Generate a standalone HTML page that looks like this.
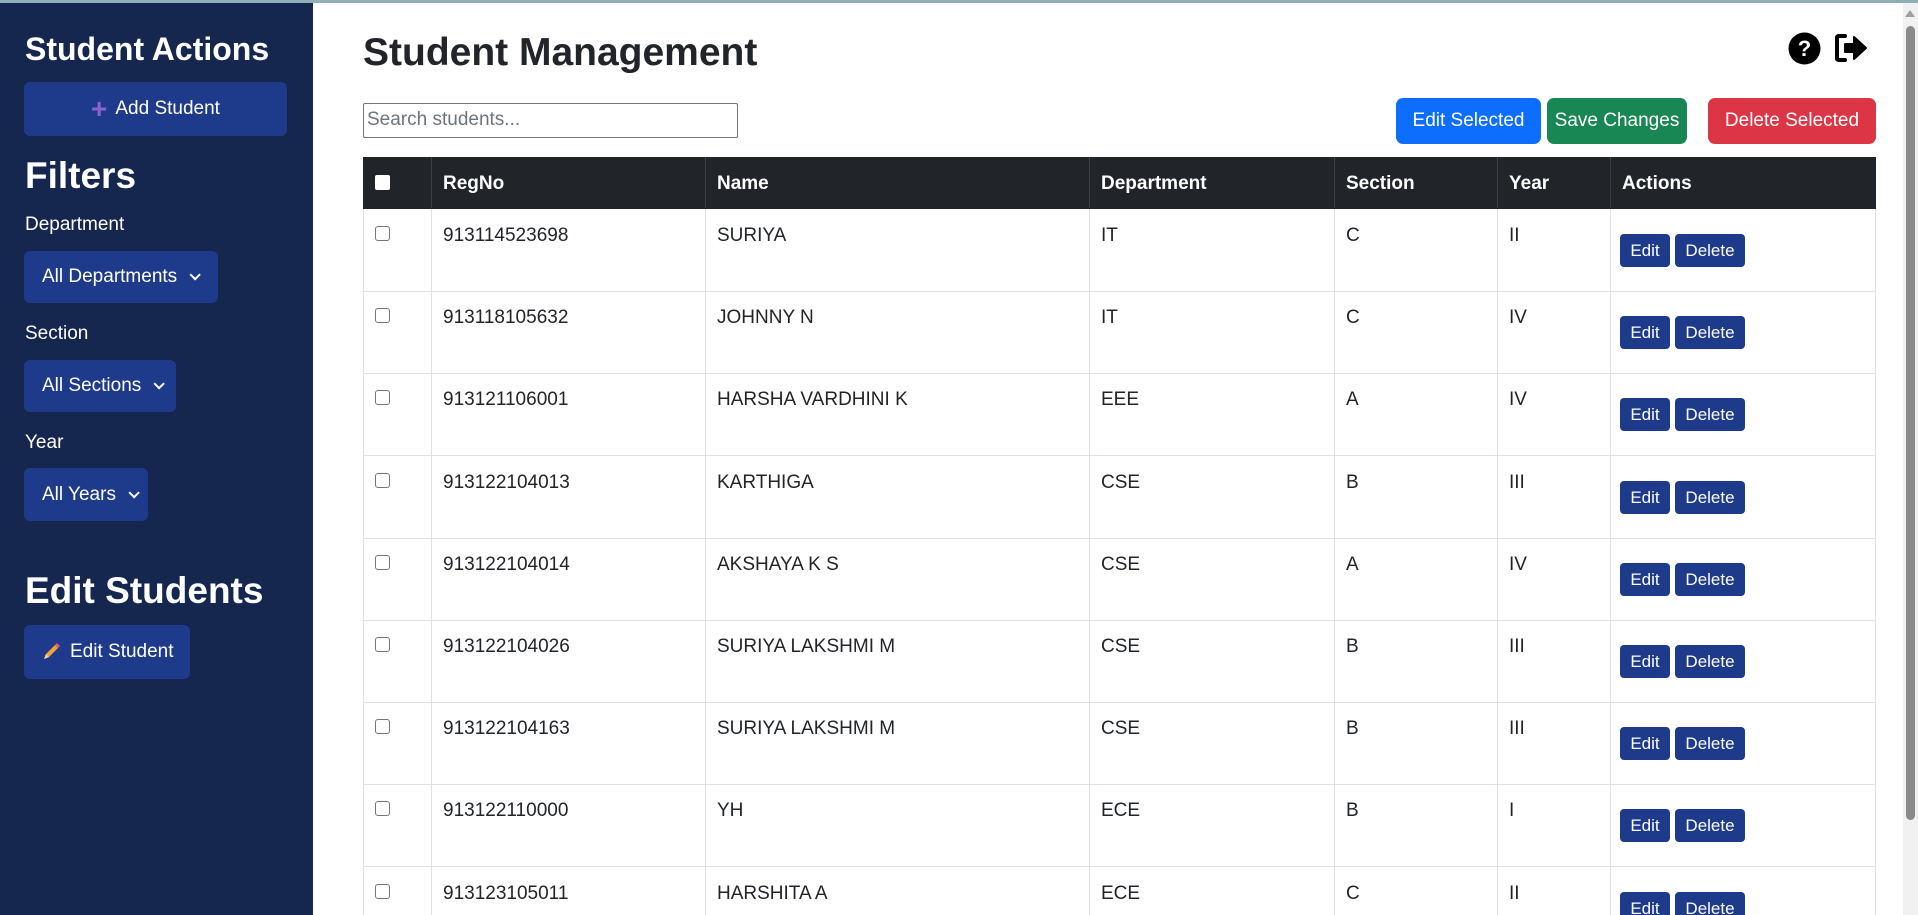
<!DOCTYPE html>
<html style="height:915px;overflow:hidden"><head><meta charset="utf-8"><style>
*{box-sizing:border-box;margin:0;padding:0}
body{width:1918px;height:915px;overflow:hidden;font-family:"Liberation Sans",sans-serif;background:#fff;position:relative;color:#212529}
.top{position:absolute;left:0;top:0;width:1918px;height:3px;background:#8fb0b8}
.side{position:absolute;left:0;top:3px;width:313px;height:912px;background:#15264f;color:#fff}
.a{position:absolute}
.btn{position:absolute;background:#1e3a8a;color:#fff;border-radius:6px;font-size:19px;display:flex;align-items:center}
.lbl{position:absolute;left:25px;font-size:19px;color:#fff}
.chev{margin-left:12px;width:8px;height:8px;border-right:2px solid #fff;border-bottom:2px solid #fff;transform:rotate(45deg) translateY(-3px)}
.row{position:absolute;left:363px;width:1513px;border-bottom:1px solid #dee2e6;border-left:1px solid #dee2e6;border-right:1px solid #dee2e6}
.c{position:absolute;top:0;bottom:0;border-left:1px solid #dee2e6;font-size:19px;padding:16px 0 0 11px}
.h .c{border-left:1px solid #3a3f44;color:#fff;font-weight:bold;padding-top:16px}
.cb{position:absolute;left:11px;top:17px;width:15px;height:15px;border:1px solid #767676;border-radius:3px;background:#fff}
.sb{position:absolute;height:33px;top:25px;background:#1e3a8a;color:#fff;border-radius:4px;font-size:17px;display:flex;align-items:center;justify-content:center}
.mb{position:absolute;top:98px;height:46px;border-radius:7px;color:#fff;font-size:19px;display:flex;align-items:center;justify-content:center}
</style></head><body>
<div class="top"></div>
<div class="side">
<div class="a" style="left:25px;top:28px;font-size:32px;font-weight:bold">Student Actions</div>
<div class="btn" style="left:24px;top:79px;width:263px;height:54px;justify-content:center"><span style="color:#8a63d2;font-size:28px;font-weight:bold;margin-right:8px;line-height:1">+</span>Add Student</div>
<div class="a" style="left:25px;top:152px;font-size:37px;font-weight:bold">Filters</div>
<div class="lbl" style="top:211px">Department</div>
<div class="btn" style="left:24px;top:248px;width:194px;height:52px;padding-left:18px">All Departments<span class="chev"></span></div>
<div class="lbl" style="top:320px">Section</div>
<div class="btn" style="left:24px;top:357px;width:152px;height:52px;padding-left:18px">All Sections<span class="chev"></span></div>
<div class="lbl" style="top:429px">Year</div>
<div class="btn" style="left:24px;top:465px;width:124px;height:53px;padding-left:18px">All Years<span class="chev"></span></div>
<div class="a" style="left:25px;top:567px;font-size:37px;font-weight:bold">Edit Students</div>
<div class="btn" style="left:24px;top:622px;width:166px;height:54px;padding-left:16px"><svg width="22" height="22" viewBox="0 0 22 22" style="margin-right:8px"><path d="M4 18 L6 13 L15 4 L18 7 L9 16 Z" fill="#f4a13a"/><path d="M15 4 L17 2 L20 5 L18 7Z" fill="#e85a6b"/><path d="M4 18 L6 13 L9 16Z" fill="#f5d6a0"/></svg>Edit Student</div>
</div>

<div class="a" style="left:363px;top:31px;font-size:39px;font-weight:bold;color:#212529">Student Management</div>
<svg class="a" style="left:1788px;top:32px" width="33" height="33" viewBox="0 0 33 33"><circle cx="16.5" cy="16.5" r="16" fill="#000"/><text x="16.5" y="24" text-anchor="middle" font-family="Liberation Sans" font-weight="bold" font-size="22" fill="#fff">?</text></svg>
<svg class="a" style="left:1834px;top:33px" width="34" height="30" viewBox="0 0 34 30"><path d="M11 3 H5 Q3 3 3 5 V25 Q3 27 5 27 H11" fill="none" stroke="#000" stroke-width="4" stroke-linecap="round"/><path d="M11 11 H20 V4 L32 15 L20 26 V19 H11 Z" fill="#000" stroke="#000" stroke-width="2" stroke-linejoin="round"/></svg>
<div class="a" style="left:363px;top:103px;width:375px;height:35px;border:1px solid #767676;border-radius:2px;font-size:19px;color:#6c757d;padding:5px 3px">Search students...</div>
<div class="mb" style="left:1396px;width:145px;background:#0d6efd">Edit Selected</div>
<div class="mb" style="left:1547px;width:140px;background:#198754">Save Changes</div>
<div class="mb" style="left:1708px;width:168px;background:#dc3545">Delete Selected</div>

<div class="row h" style="top:157px;height:52px;background:#212529;border-color:#212529">
<div style="position:absolute;left:11px;top:18px;width:15px;height:15px;background:#fff;border-radius:2px"></div>
<div class="c" style="left:67px">RegNo</div><div class="c" style="left:341px">Name</div><div class="c" style="left:725px">Department</div><div class="c" style="left:970px">Section</div><div class="c" style="left:1133px">Year</div><div class="c" style="left:1246px">Actions</div>
</div>
<div id="rows"></div>
<script>
var d=[["913114523698","SURIYA","IT","C","II"],["913118105632","JOHNNY N","IT","C","IV"],["913121106001","HARSHA VARDHINI K","EEE","A","IV"],["913122104013","KARTHIGA","CSE","B","III"],["913122104014","AKSHAYA K S","CSE","A","IV"],["913122104026","SURIYA LAKSHMI M","CSE","B","III"],["913122104163","SURIYA LAKSHMI M","CSE","B","III"],["913122110000","YH","ECE","B","I"],["913123105011","HARSHITA A","ECE","C","II"]];
var h="";d.forEach(function(r,i){var t=Math.round(209+i*82.2);h+='<div class="row" style="top:'+t+'px;height:83px"><div class="cb"></div><div class="c" style="left:67px">'+r[0]+'</div><div class="c" style="left:341px">'+r[1]+'</div><div class="c" style="left:725px">'+r[2]+'</div><div class="c" style="left:970px">'+r[3]+'</div><div class="c" style="left:1133px">'+r[4]+'</div><div class="c" style="left:1246px"></div><div class="sb" style="left:1256px;width:50px">Edit</div><div class="sb" style="left:1311px;width:70px">Delete</div></div>';});
document.getElementById("rows").innerHTML=h;
</script>
<div class="a" style="left:1903px;top:3px;width:15px;height:912px;background:#f1f1f1"></div>
<div class="a" style="left:1906px;top:26px;width:9px;height:794px;background:#8a8a8a;border-radius:5px"></div>
<div class="a" style="left:1905px;top:10px;width:0;height:0;border-left:5px solid transparent;border-right:5px solid transparent;border-bottom:7px solid #a0a0a0"></div>
</body></html>
